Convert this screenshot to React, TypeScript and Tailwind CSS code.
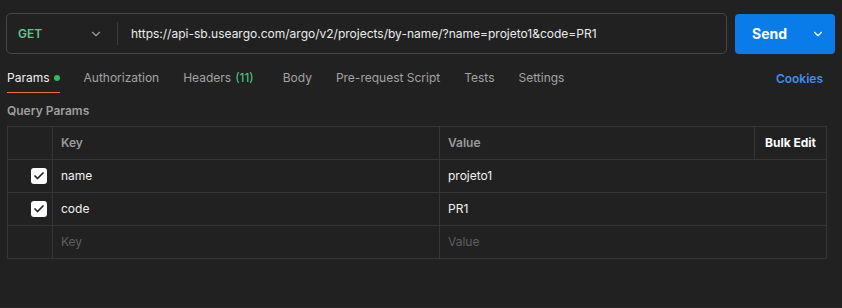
import { ChevronDown, Check } from 'lucide-react'

const tabs = [
  { label: 'Params', active: true, dot: true },
  { label: 'Authorization' },
  { label: 'Headers', count: '(11)' },
  { label: 'Body' },
  { label: 'Pre-request Script' },
  { label: 'Tests' },
  { label: 'Settings' },
]

const rows = [
  { key: 'name', value: 'projeto1', checked: true },
  { key: 'code', value: 'PR1', checked: true },
]

function Checkbox() {
  return (
    <div className="w-4 h-4 rounded-[3px] bg-white flex items-center justify-center">
      <Check size={12} strokeWidth={3.5} className="text-[#212121]" />
    </div>
  )
}

export default function App() {
  return (
    <div
      className="w-[842px] h-[308px] bg-[#212121] text-[#e6e6e6] border-b border-[#2c2c2c] overflow-hidden"
      style={{ fontFamily: 'Inter, "Noto Sans", sans-serif' }}
    >
      {/* Request bar */}
      <div className="flex items-center gap-2 pl-[6px] pr-[7px] pt-[13px]">
        <div className="flex-1 h-[41px] border border-[#474747] rounded-[5px] flex items-center">
          <div className="w-[110px] flex items-center justify-between pl-[11px] pr-[14px]">
            <span className="text-[12px] font-semibold text-[#55c98a]">GET</span>
            <ChevronDown size={14} className="text-[#9a9a9a]" />
          </div>
          <div className="w-px h-[23px] bg-[#3d3d3d]" />
          <span className="pl-[13px] text-[12px] text-[#ececec]">
            https://api-sb.useargo.com/argo/v2/projects/by-name/?name=projeto1&amp;code=PR1
          </span>
        </div>
        <div className="w-[100px] h-[40px] rounded-[4px] bg-[#0a7cea] flex items-center justify-between pl-[17px] pr-[10px]">
          <span className="text-[14px] font-bold text-white">Send</span>
          <ChevronDown size={14} className="text-white" />
        </div>
      </div>

      {/* Tabs */}
      <div className="flex items-center justify-between pl-[7px] pr-[19px] mt-[8px]">
        <div className="flex items-center gap-[24px]">
          {tabs.map((t) => (
            <div
              key={t.label}
              className={
                'h-[31px] pt-[2px] flex items-center gap-[4px] text-[12px] border-b ' +
                (t.active ? 'border-[#f26b3a] text-[#f0f0f0]' : 'border-transparent text-[#a3a3a3]') +
                (t.count ? ' pr-[5px]' : '')
              }
            >
              <span>{t.label}</span>
              {t.count && <span className="text-[#55c98a]">{t.count}</span>}
              {t.dot && <span className="w-[6px] h-[6px] rounded-full bg-[#2dbb5b]" />}
            </div>
          ))}
        </div>
        <span className="text-[12px] font-semibold text-[#3e8df0] pt-[2px]">Cookies</span>
      </div>

      {/* Query params */}
      <div className="pl-[7px] pt-[10px] text-[12px] font-semibold text-[#9e9e9e] leading-[16px]">Query Params</div>

      <div className="ml-[7px] mt-[7px] w-[820px] border-t border-x border-[#363636] text-[12px]">
        <div className="flex h-[33px] border-b border-[#363636]">
          <div className="w-[45px] border-r border-[#363636]" />
          <div className="w-[387px] border-r border-[#363636] flex items-center pl-[8px] font-semibold text-[#9a9a9a]">
            Key
          </div>
          <div className="w-[315px] border-r border-[#363636] flex items-center pl-[8px] font-semibold text-[#9a9a9a]">
            Value
          </div>
          <div className="flex-1 flex items-center justify-center font-bold text-white">Bulk Edit</div>
        </div>
        {rows.map((r) => (
          <div key={r.key} className="flex h-[33px] border-b border-[#363636]">
            <div className="w-[45px] border-r border-[#363636] flex items-center justify-end pr-[5px]">
              {r.checked && <Checkbox />}
            </div>
            <div className="w-[387px] border-r border-[#363636] flex items-center pl-[8px] text-[#f2f2f2]">{r.key}</div>
            <div className="flex-1 flex items-center pl-[8px] text-[#f2f2f2]">{r.value}</div>
          </div>
        ))}
        <div className="flex h-[33px] border-b border-[#363636]">
          <div className="w-[45px] border-r border-[#363636]" />
          <div className="w-[387px] border-r border-[#363636] flex items-center pl-[8px] text-[#5f5f5f]">Key</div>
          <div className="flex-1 flex items-center pl-[8px] text-[#5f5f5f]">Value</div>
        </div>
      </div>
    </div>
  )
}
